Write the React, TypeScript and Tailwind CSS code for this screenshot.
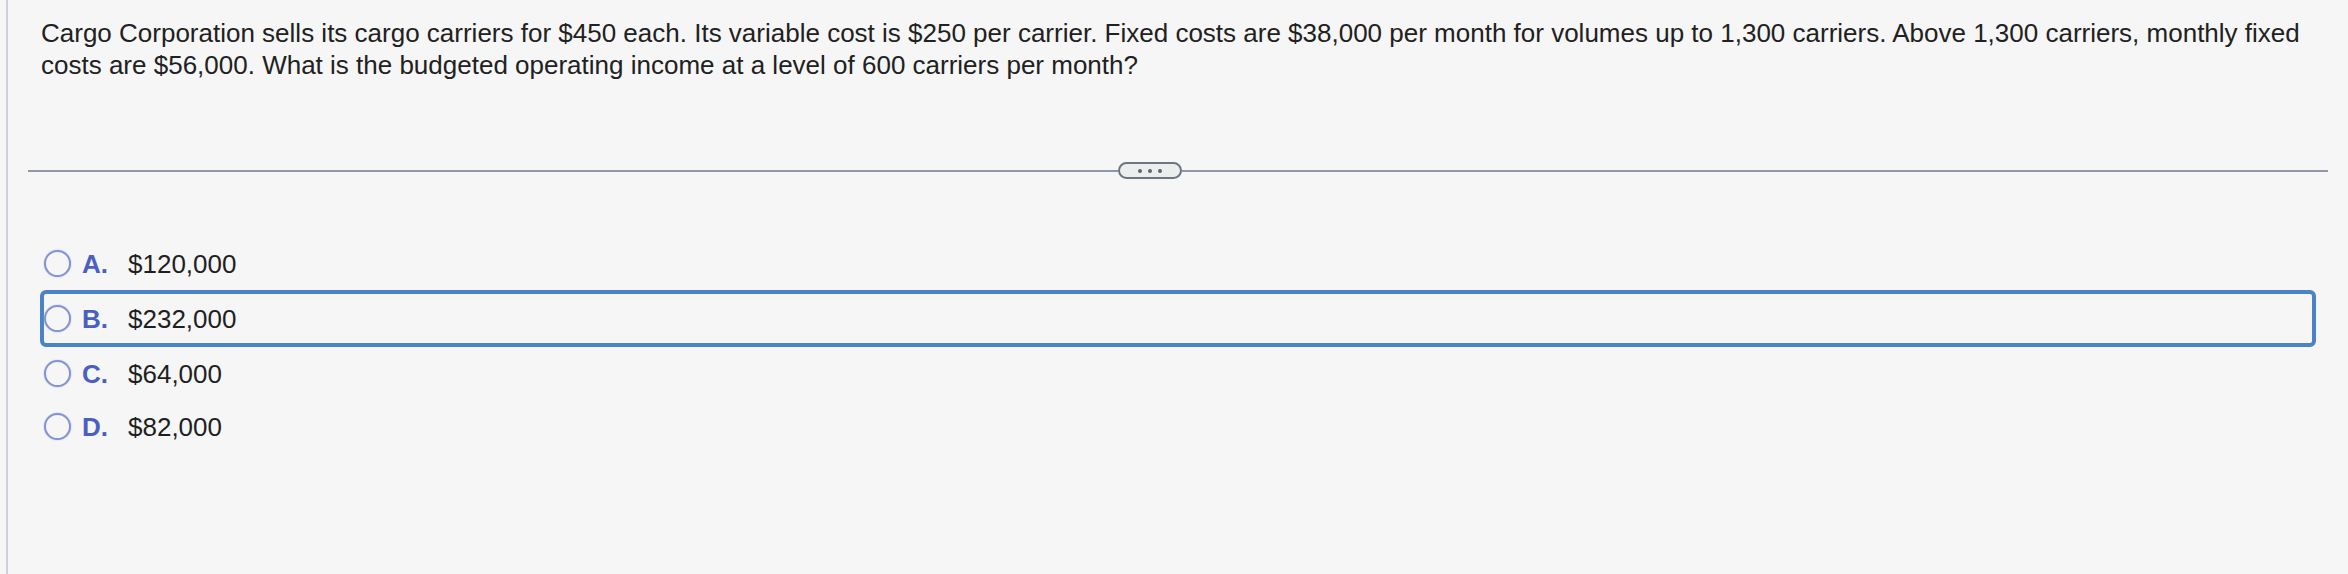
import React from "react";

const options = [
  { key: "A.", value: "$120,000", selected: false },
  { key: "B.", value: "$232,000", selected: true },
  { key: "C.", value: "$64,000", selected: false },
  { key: "D.", value: "$82,000", selected: false },
];

export default function App() {
  return (
    <div
      className="w-[2348px] h-[574px] bg-[#f6f6f6] overflow-hidden"
      style={{ fontFamily: '"Liberation Sans", Arial, Helvetica, sans-serif' }}
    >
      <div className="ml-[6px] h-full border-l-2 border-[#cdd1dd]">
        <p className="pt-[17px] pl-[33px] pr-[14px] text-[26px] leading-[32px] text-[#212121]">
          Cargo Corporation sells its cargo carriers for $450 each. Its variable cost is $250 per carrier. Fixed costs are
          $38,000 per month for volumes up to 1,300 carriers. Above 1,300 carriers, monthly fixed costs are $56,000. What is
          the budgeted operating income at a level of 600 carriers per month?
        </p>

        <div className="mt-[81px] ml-[20px] w-[2300px] h-[17px] flex items-center">
          <div className="w-[1090px] h-[2px] bg-[#9097a6]" />
          <div className="w-[64px] h-[17px] rounded-full border-2 border-[#6e7582] bg-[#eceeee] flex items-center justify-center gap-[6px]">
            <span className="w-[4px] h-[4px] rounded-full bg-[#5f6570]" />
            <span className="w-[4px] h-[4px] rounded-full bg-[#5f6570]" />
            <span className="w-[4px] h-[4px] rounded-full bg-[#5f6570]" />
          </div>
          <div className="flex-1 h-[2px] bg-[#9097a6]" />
        </div>

        <div className="mt-[58px] ml-[32px] w-[2276px] flex flex-col">
          {options.map((o) =>
            o.selected ? (
              <div
                key={o.key}
                className="h-[57px] border-4 border-[#4a84c6] rounded-[6px] flex items-center"
              >
                <Row k={o.key} v={o.value} />
              </div>
            ) : (
              <div key={o.key} className="h-[53px] pl-[4px] flex items-center">
                <Row k={o.key} v={o.value} />
              </div>
            )
          )}
        </div>
      </div>
    </div>
  );
}

function Row({ k, v }: { k: string; v: string }) {
  return (
    <>
      <span className="w-[27px] h-[27px] rounded-full border-2 border-[#8593d6] shadow-[0_0_1.5px_#aab3e3] bg-[#f6f6f6] shrink-0" />
      <span className="ml-[11px] mt-[1px] w-[46px] text-[26px] font-bold text-[#4b5ec2] leading-none">{k}</span>
      <span className="mt-[1px] text-[26px] text-[#1f1f1f] leading-none">{v}</span>
    </>
  );
}
